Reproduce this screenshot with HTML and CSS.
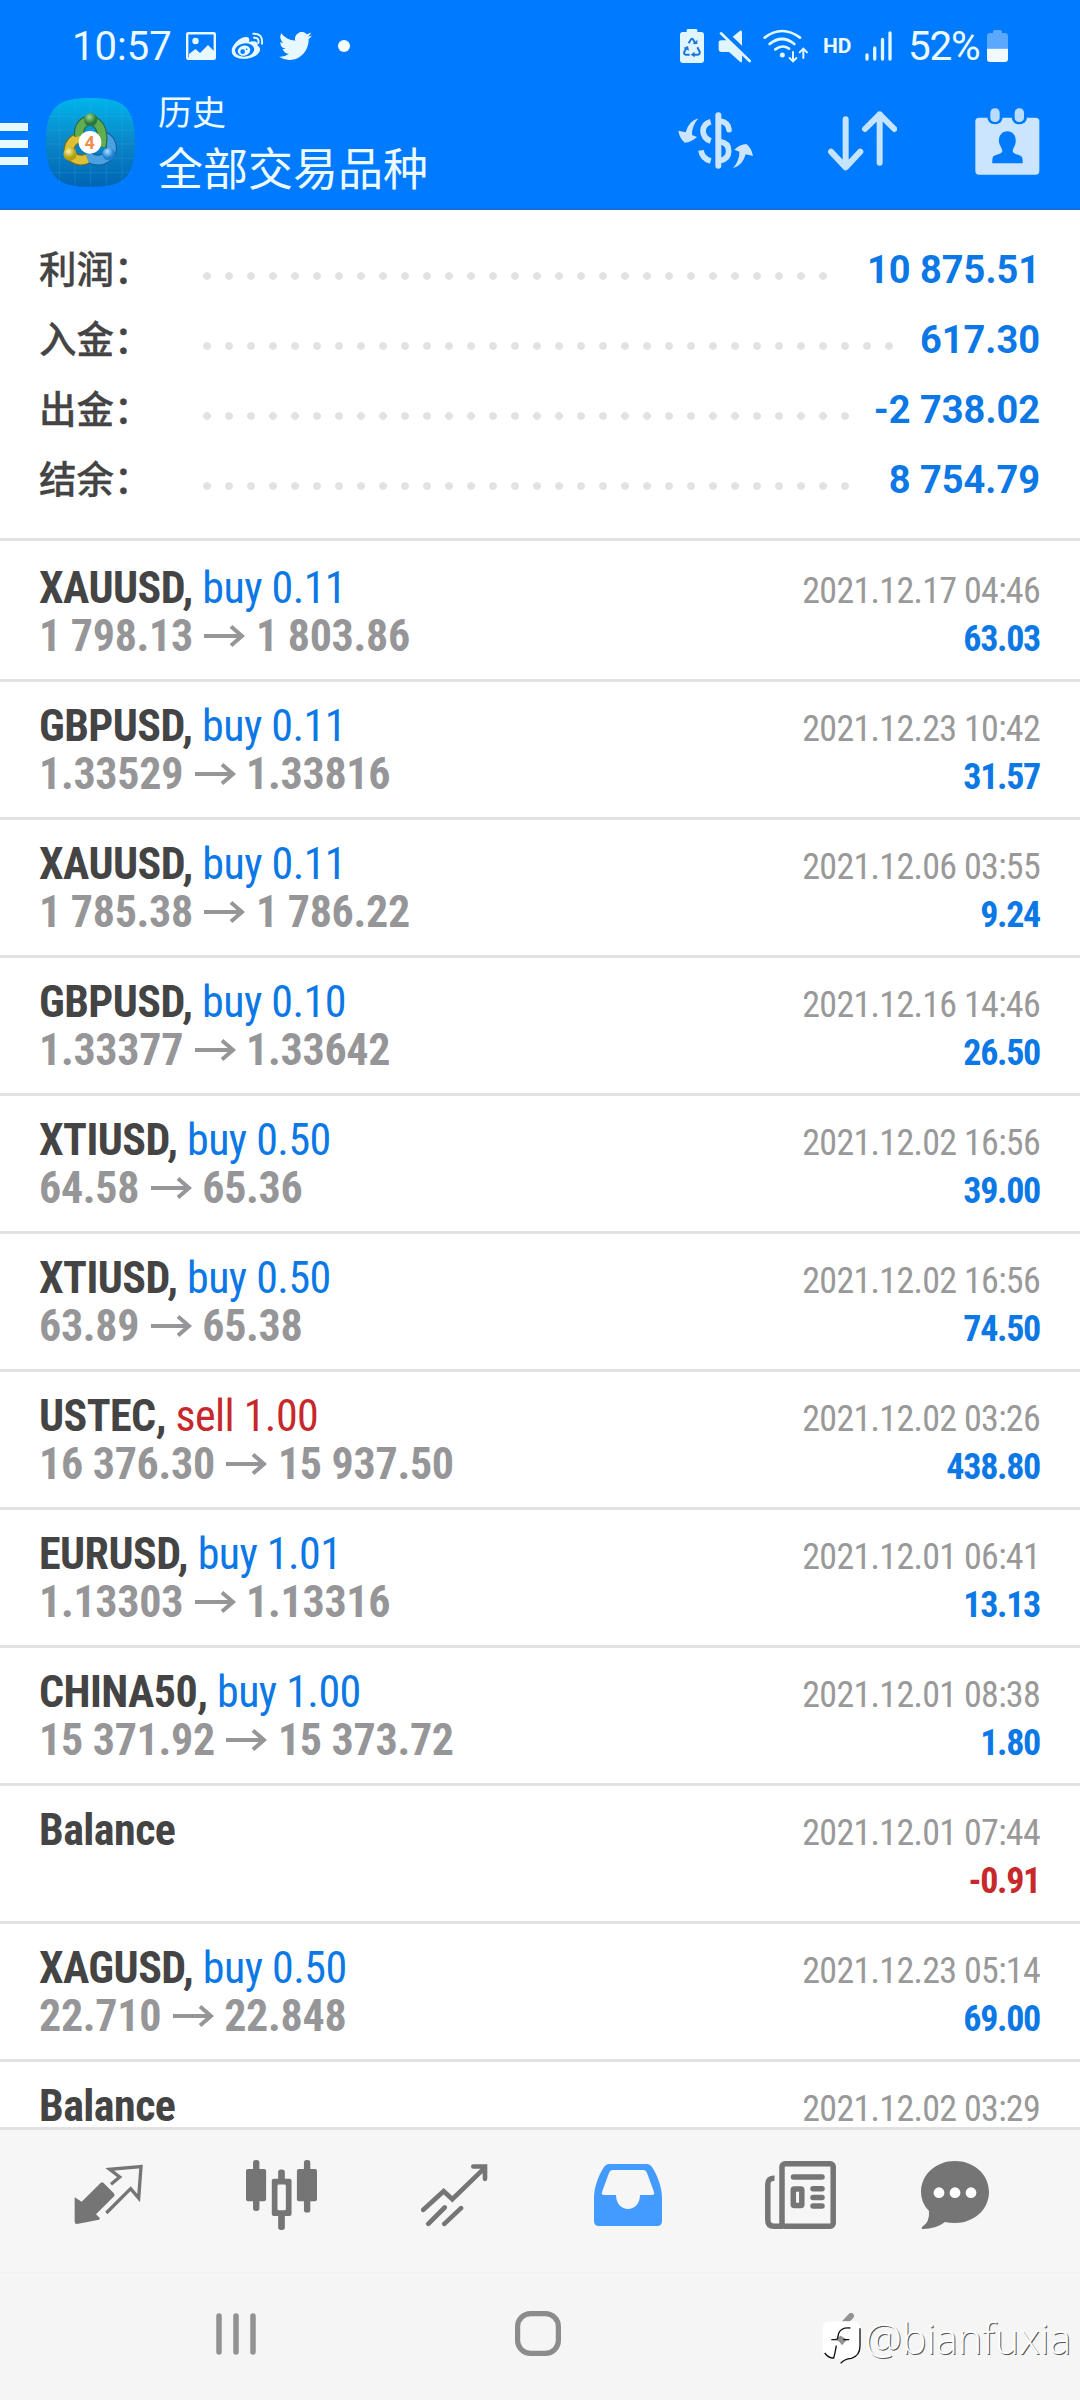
FILE: index.html
```html
<!DOCTYPE html>
<html lang="zh-CN">
<head>
<meta charset="utf-8">
<title>历史</title>
<link rel="stylesheet" href="styles.css">
</head>
<body>
<svg class="defs" width="0" height="0" aria-hidden="true">
  <symbol id="arrow" viewBox="0 0 41 24"><path d="M0 12H38M27 2.500L38 12L27 21.500" fill="none" stroke="currentColor" stroke-width="4"/></symbol>
</svg>
<div class="screen">
  <header class="top">
    <div class="status">
      <span class="clock">10:57</span>
      <svg class="s-pic" width="30" height="28" viewBox="0 0 30 28"><rect x="1.200" y="1.200" width="27.600" height="25.600" rx="1" fill="none" stroke="#e8f8ff" stroke-width="2.400"/><circle cx="9.500" cy="9" r="3.200" fill="#e8f8ff"/><path d="M3 22l6.500-5 4.500 4 8-8 6 6v8H3z" fill="#e8f8ff"/></svg>
      <svg class="s-weibo" width="33" height="28" viewBox="695 37 99 84"><path d="M697 93C697 76 722 51 742 52C751 53 751 61 749 67C761 62 777 64 775 78C786 84 783 95 776 102C764 115 742 118 728 117C710 116 697 107 697 93Z" fill="#e8f8ff"/><ellipse cx="736" cy="91" rx="29" ry="20" fill="#007aff" transform="rotate(-8 736 91)"/><ellipse cx="734" cy="93" rx="19" ry="15" fill="#e8f8ff" transform="rotate(-15 734 93)"/><circle cx="730" cy="96" r="7" fill="#007aff"/><circle cx="742" cy="89" r="2.500" fill="#007aff"/><path d="M764 54Q780 53 777 70M762 42Q791 40 788 72" fill="none" stroke="#e8f8ff" stroke-width="6" stroke-linecap="round"/></svg>
      <svg class="s-bird" width="33" height="28" viewBox="0 2.200 24 19.600" preserveAspectRatio="none"><path fill="#e8f8ff" d="M23.953 4.57a10 10 0 01-2.825.775 4.958 4.958 0 002.163-2.723c-.951.555-2.005.959-3.127 1.184a4.92 4.92 0 00-8.384 4.482C7.69 8.095 4.067 6.13 1.64 3.162a4.822 4.822 0 00-.666 2.475c0 1.71.87 3.213 2.188 4.096a4.904 4.904 0 01-2.228-.616v.06a4.923 4.923 0 003.946 4.827 4.996 4.996 0 01-2.212.085 4.936 4.936 0 004.604 3.417 9.867 9.867 0 01-6.102 2.105c-.39 0-.779-.023-1.17-.067a13.995 13.995 0 007.557 2.209c9.053 0 13.998-7.496 13.998-13.985 0-.21 0-.42-.015-.63A9.935 9.935 0 0024 4.59z"/></svg>
      <span class="s-dot"></span>
      <svg class="s-saver" width="24" height="34" viewBox="60 27 72 102"><path d="M80 36V31Q80 27 84 27H108Q112 27 112 31V36H124Q132 36 132 45V120Q132 129 123 129H69Q60 129 60 120V45Q60 36 68 36Z" fill="#e0f5ff"/><path d="M86 70L93 58Q96 55 99 58L107 72M112 82L119 95Q121 103 113 104H101M89 104H78Q70 103 73 95L81 82" fill="none" stroke="#1b76dd" stroke-width="6"/><path d="M98 72h14v-13zM104 95v17l-12-8zM70 84l14-6 3 14z" fill="#1b76dd"/></svg>
      <svg class="s-mute" width="33" height="33" viewBox="174 28 99 99"><path d="M176 64Q176 59 183 59H206L246 99V121Q246 126 241 124L207 94H185Q176 94 176 86ZM218 48L240 30Q246 28 246 34V75Z" fill="#e0f5ff"/><path d="M183 38L269 121" stroke="#e0f5ff" stroke-width="8" stroke-linecap="round"/></svg>
      <svg class="s-wifi" width="45" height="34" viewBox="310 25 135 102" fill="none" stroke="#e0f8ff" stroke-width="8" stroke-linecap="round"><path d="M315 51Q367 11 421 51M330 70Q367 40 404 70M347 86Q368 70 388 84"/><circle cx="368" cy="103" r="3.500" fill="#e0f8ff"/><path d="M400 94V120M390 112L400 122L410 112M431 112V86M420 95L431 84L442 95" stroke-width="6"/></svg>
      <span class="s-hd">HD</span>
      <svg class="s-signal" width="27" height="30" viewBox="0 0 27 30"><path d="M2 24V28M9.700 17V28M17.500 8.500V28M25 2V28" stroke="#e0f8ff" stroke-width="3.300" stroke-linecap="round"/></svg>
      <span class="s-pct">52%</span>
      <svg class="s-batt" width="21" height="32" viewBox="0 0 21 32"><path d="M6 3V2Q6 0 8 0H13Q15 0 15 2V3H18Q21 3 21 6V18H0V6Q0 3 3 3Z" fill="#5ba8ff"/><path d="M0 18.500H21V29Q21 32 18 32H3Q0 32 0 29Z" fill="#f0faff"/></svg>
    </div>
    <div class="bar">
      <div class="menu"><i></i><i></i><i></i></div>
      <svg class="logo" width="89" height="89" viewBox="138 234 267 267">
        <defs>
          <linearGradient id="bg" x1="0" y1="0" x2="0" y2="1"><stop offset="0" stop-color="#00b4ec"/><stop offset=".5" stop-color="#0b86c8"/><stop offset="1" stop-color="#0064b4"/></linearGradient>
          <radialGradient id="gr" cx=".4" cy=".3"><stop offset="0" stop-color="#9fdc8c"/><stop offset="1" stop-color="#28783c"/></radialGradient>
          <radialGradient id="ye" cx=".4" cy=".3"><stop offset="0" stop-color="#fff0a0"/><stop offset="1" stop-color="#b0a010"/></radialGradient>
          <radialGradient id="bl" cx=".4" cy=".3"><stop offset="0" stop-color="#a8e0ff"/><stop offset="1" stop-color="#1f7fd0"/></radialGradient>
        </defs>
        <path d="M272 234C370 234 405 260 405 367S370 501 272 501 138 474 138 367 173 234 272 234Z" fill="url(#bg)"/>
        <path d="M178 240V494M225 236V500M272 236V500M319 236V500M366 240V494M142 290H402M140 330H404M140 372H404M140 415H404M145 458H398" stroke="#41b9e4" stroke-width="1.500" opacity=".4"/>
        <g fill="none">
          <path d="M258 402C272 422 305 428 324 408C342 390 336 362 312 350" stroke="#185f9a" stroke-width="33"/>
          <path d="M258 402C272 422 305 428 324 408C342 390 336 362 312 350" stroke="#4aa3e0" stroke-width="26"/>
          <path d="M262 416C226 430 198 402 210 376Q220 354 244 354" stroke="#6c7020" stroke-width="33"/>
          <path d="M262 416C226 430 198 402 210 376Q220 354 244 354" stroke="#dcc136" stroke-width="26"/>
          <path d="M238 348C234 320 250 302 270 302S316 325 304 380" stroke="#256b45" stroke-width="31"/>
          <path d="M238 348C234 320 250 302 270 302S316 325 304 380" stroke="#62ad50" stroke-width="24"/>
        </g>
        <circle cx="272" cy="299" r="20" fill="url(#gr)"/><circle cx="210" cy="402" r="20" fill="url(#ye)"/><circle cx="326" cy="402" r="19" fill="url(#bl)"/>
        <circle cx="270" cy="367" r="34" fill="#fff"/>
        <text x="269" y="387" class="logo-num">4</text>
      </svg>
      <div class="titles"><span class="sub">历史</span><span class="title">全部交易品种</span></div>
      <svg class="a-money" width="76" height="59" viewBox="52 272 228 177"><g fill="none" stroke="#cce5ff" stroke-width="17"><path d="M173 285V436" stroke-width="18" stroke-linecap="round"/><path d="M178 302Q203 306 205 328" stroke-linecap="round"/><path d="M178 364Q204 368 204 392T178 421"/><path d="M150 304Q128 310 127 332Q128 354 150 362M121 390Q124 414 150 422"/></g><g fill="#cce5ff"><path id="swoop" d="M113 294Q84 302 75 336L53 331Q57 355 73 367Q92 366 109 350L94 344Q93 318 113 294Z"/><use href="#swoop" transform="rotate(180 165 369)"/></g></svg>
      <svg class="a-sort" width="69" height="60" viewBox="499 275 207 180" fill="none" stroke="#c4e4ff" stroke-width="18" stroke-linecap="round" stroke-linejoin="round"><path d="M552 300V444M508 397L552 444L596 397M654 430V285M610 329L654 285L698 329"/></svg>
      <svg class="a-cal" width="65" height="67" viewBox="944 263 195 201"><rect x="945" y="292" width="192" height="171" rx="11" fill="#cce5ff"/><g fill="#007aff"><rect x="981" y="258" width="46" height="54" rx="22"/><rect x="1054" y="258" width="46" height="54" rx="22"/><path d="M1041 333C1058 333 1068 347 1066 366C1065 377 1058 383 1057 391C1057 400 1074 403 1082 407Q1088 411 1087 429H996Q995 411 1000 407C1008 403 1026 400 1026 391C1025 383 1018 377 1016 366C1014 347 1024 333 1041 333Z"/></g><rect x="990" y="264" width="28" height="41" rx="13" fill="#b8dcff"/><rect x="1063" y="264" width="28" height="41" rx="13" fill="#b8dcff"/></svg>
    </div>
  </header>

  <main class="content">
    <section class="summary">
      <div class="sum"><span class="k">利润：</span><span class="dots n29"></span><b>10 875.51</b></div>
      <div class="sum"><span class="k">入金：</span><span class="dots n32"></span><b>617.30</b></div>
      <div class="sum"><span class="k">出金：</span><span class="dots n30"></span><b>-2 738.02</b></div>
      <div class="sum"><span class="k">结余：</span><span class="dots n30"></span><b>8 754.79</b></div>
    </section>
    <section class="deals">
      <div class="deal"><span class="sym">XAUUSD, <em>buy 0.11</em></span><time>2021.12.17 04:46</time><span class="px">1 798.13<svg><use href="#arrow"/></svg>1 803.86</span><b>63.03</b></div>
      <div class="deal"><span class="sym">GBPUSD, <em>buy 0.11</em></span><time>2021.12.23 10:42</time><span class="px">1.33529<svg><use href="#arrow"/></svg>1.33816</span><b>31.57</b></div>
      <div class="deal"><span class="sym">XAUUSD, <em>buy 0.11</em></span><time>2021.12.06 03:55</time><span class="px">1 785.38<svg><use href="#arrow"/></svg>1 786.22</span><b>9.24</b></div>
      <div class="deal"><span class="sym">GBPUSD, <em>buy 0.10</em></span><time>2021.12.16 14:46</time><span class="px">1.33377<svg><use href="#arrow"/></svg>1.33642</span><b>26.50</b></div>
      <div class="deal"><span class="sym">XTIUSD, <em>buy 0.50</em></span><time>2021.12.02 16:56</time><span class="px">64.58<svg><use href="#arrow"/></svg>65.36</span><b>39.00</b></div>
      <div class="deal"><span class="sym">XTIUSD, <em>buy 0.50</em></span><time>2021.12.02 16:56</time><span class="px">63.89<svg><use href="#arrow"/></svg>65.38</span><b>74.50</b></div>
      <div class="deal"><span class="sym">USTEC, <em class="neg">sell 1.00</em></span><time>2021.12.02 03:26</time><span class="px">16 376.30<svg><use href="#arrow"/></svg>15 937.50</span><b>438.80</b></div>
      <div class="deal"><span class="sym">EURUSD, <em>buy 1.01</em></span><time>2021.12.01 06:41</time><span class="px">1.13303<svg><use href="#arrow"/></svg>1.13316</span><b>13.13</b></div>
      <div class="deal"><span class="sym">CHINA50, <em>buy 1.00</em></span><time>2021.12.01 08:38</time><span class="px">15 371.92<svg><use href="#arrow"/></svg>15 373.72</span><b>1.80</b></div>
      <div class="deal"><span class="sym">Balance</span><time>2021.12.01 07:44</time><span class="px"></span><b class="neg">-0.91</b></div>
      <div class="deal"><span class="sym">XAGUSD, <em>buy 0.50</em></span><time>2021.12.23 05:14</time><span class="px">22.710<svg><use href="#arrow"/></svg>22.848</span><b>69.00</b></div>
      <div class="deal"><span class="sym">Balance</span><time>2021.12.02 03:29</time></div>
    </section>
  </main>

  <nav class="tabs">
    <svg width="69" height="62" viewBox="43 78 207 186"><path d="M45 178L66 191L125 133L131 134L164 167V174L109 229L121 241L118 245L52 258Q45 258 45 251Z" fill="#757575"/><path d="M154 139L180 117L150 94L244 86L237 180L213 152L140 225" fill="none" stroke="#757575" stroke-width="10"/></svg>
    <svg width="71" height="70" viewBox="557 63 212 209"><g fill="#757575"><rect x="557" y="90" width="60" height="96" rx="6"/><rect x="709" y="90" width="60" height="96" rx="6"/><rect x="578" y="63" width="19" height="152" rx="8"/><rect x="730" y="63" width="19" height="157" rx="8"/><rect x="653" y="91" width="20" height="181" rx="8"/><rect x="634" y="119" width="59" height="111" rx="6"/></g><rect x="651" y="136" width="25" height="77" rx="4" fill="#f6f6f6"/></svg>
    <svg width="67" height="63" viewBox="1083 72 201 188" fill="none" stroke="#757575" stroke-width="14" stroke-linecap="round"><path d="M1090 209L1151 153L1177 177L1271 86M1240 79H1275V116M1105 251L1154 202M1153 251L1203 204"/></svg>
    <svg width="68" height="62" viewBox="0 0 68 62"><path fill="#439bff" fill-rule="evenodd" d="M15 0H53Q56 0 58 3C64 12 68 24 68 34V57Q68 62 63 62H5Q0 62 0 57V34C0 24 4 12 10 3Q12 0 15 0ZM19 6Q16 6 15 9L8 28Q7 31 10 31H22C22 40 28 45 34 45S46 40 46 31H58Q61 31 60 28L53 9Q52 6 49 6Z"/></svg>
    <svg width="71" height="68" viewBox="0 0 71 68" fill="none" stroke="#757575" stroke-width="5.500" stroke-linecap="round"><rect x="17" y="2.750" width="51.200" height="62.500" rx="3"/><path d="M9.500 17.200Q2.800 17 2.800 23V59Q2.800 65.200 9 65.200H18" stroke-linecap="butt"/><path d="M28.500 16H57M48 27.800H57M48 36.400H57M48 45H57"/><rect x="28.300" y="28" width="8.500" height="16.500" rx="1"/></svg>
    <svg width="68" height="68" viewBox="0 0 68 68"><path d="M34 0C53 0 68 13.500 68 31S53 62 34 62Q28 62 24 61Q15 68 2 68Q0 68 1 66Q9 61 8 50Q0 42 0 31C0 13.500 15 0 34 0Z" fill="#757575"/><g fill="#fff"><circle cx="18" cy="31.700" r="5.400"/><circle cx="34" cy="31.700" r="5.400"/><circle cx="50" cy="31.700" r="5.400"/></g></svg>
  </nav>
  <footer class="sysnav">
    <svg class="recents" width="40" height="42" viewBox="0 0 40 42"><path d="M3 3V39M20 3V39M37 3V39" stroke="#929292" stroke-width="5.500" stroke-linecap="round"/></svg>
    <svg class="home" width="46" height="45" viewBox="0 0 46 45"><rect x="2.600" y="2.600" width="40.800" height="39.800" rx="13" fill="none" stroke="#8c8c8c" stroke-width="5.200"/></svg>
    <svg class="back" width="24" height="42" viewBox="0 0 24 42"><path d="M21 3L4 21" fill="none" stroke="#929292" stroke-width="6" stroke-linecap="round"/></svg>
    <div class="mark">
      <svg width="40" height="46" viewBox="66 60 120 138"><path d="M88 67H162Q180 68 181 92V140Q180 172 150 180Q132 182 124 194L126 180H92Q68 176 68 150V90Q68 68 88 67Z" fill="#fff"/><path d="M122 110L142 122L135 128L126 139L118 128L104 121Z" fill="#929292"/><path d="M180 88V140Q180 170 154 178Q132 180 122 193M151 87Q124 84 116 103L112 121M94 122H110M130 122H148M109 140Q104 168 101 177Q86 178 74 162" fill="none" stroke="#111" stroke-width="4"/></svg>
      <span>@bianfuxia</span>
    </div>
  </footer>
</div>
</body>
</html>
```
FILE: styles.css
```css
* { box-sizing: border-box; }
body { margin: 0; background: #fff; font-family: Roboto, "Noto Sans CJK SC", sans-serif; }
svg { display: block; flex: none; }
.defs { position: absolute; }
.screen { width: 1080px; height: 2400px; display: flex; flex-direction: column; overflow: hidden; }

.top { flex: none; height: 210px; background: #007aff; border-bottom: 2px solid #126ed8; color: #ecfaff; }
.status { height: 92px; display: flex; align-items: center; padding-left: 72px; }
.clock { font-size: 40px; width: 99px; white-space: nowrap; }
.s-pic { margin-left: 15px; }
.s-weibo { margin-left: 15px; }
.s-bird { margin-left: 15px; }
.s-dot { width: 12px; height: 12px; border-radius: 50%; background: #f4fdff; margin-left: 26px; }
.s-saver { margin-left: auto; }
.s-mute { margin-left: 14px; }
.s-wifi { margin-left: 12px; }
.s-hd { margin-left: 15px; width: 30px; font-size: 21px; font-weight: 700; }
.s-signal { margin-left: 12px; }
.s-pct { margin-left: 16px; width: 72px; font-size: 40.500px; letter-spacing: -1.300px; white-space: nowrap; }
.s-batt { margin-left: 7px; margin-right: 72px; }

.bar { height: 104px; display: flex; align-items: center; }
.menu { width: 28px; display: flex; flex-direction: column; gap: 9.300px; }
.menu i { height: 7.500px; background: #e8f8ff; }
.logo { margin: -4px 0 0 18px; }
.logo-num { font: 700 54px Roboto, sans-serif; fill: #f08c4a; text-anchor: middle; }
.titles { margin-left: 23px; display: flex; flex-direction: column; font-family: "Noto Sans CJK SC", sans-serif; font-weight: 400; }
.sub { font-size: 34px; line-height: 46px; }
.title { font-size: 45px; line-height: 66px; }
.a-money { margin-left: auto; margin-top: -8px; }
.a-sort { margin-left: 74px; margin-top: -6px; }
.a-cal { margin-left: 78px; margin-right: 40px; margin-top: -6px; }

.content { flex: 1; min-height: 0; overflow: hidden; }
.summary { height: 331px; padding: 22px 40px 0 39px; border-bottom: 3px solid #e2e2e2; }
.sum { height: 70px; display: flex; align-items: center; }
.k { width: 157px; font: 500 37.500px/70px "Noto Sans CJK SC", sans-serif; color: #444; -webkit-text-stroke: .3px #444; }
.dots { height: 22px; margin-top: 18px; background: radial-gradient(circle at 11px 11px, #e2e2e2 3.500px, transparent 4.200px) 0 0 / 22px 22px; }
.n29 { width: calc(29 * 22px); }
.n30 { width: calc(30 * 22px); }
.n32 { width: calc(32 * 22px); }
.sum b { margin-left: auto; padding-top: 5px; font-size: 38px; color: #0c78e6; white-space: nowrap; }

.deal { height: 138px; padding: 20px 40px 0 39px; display: grid; grid-template-columns: 1fr auto; grid-auto-rows: 48px; align-items: baseline; border-bottom: 3px solid #e2e2e2; font-family: "Roboto Condensed", Roboto, sans-serif; line-height: 48px; }
.deal:first-child { height: 141px; padding-top: 23px; }
.deal:last-child { height: auto; border-bottom: 0; padding-top: 24px; grid-auto-rows: 40px; line-height: 40px; }
.sym { font-size: 44px; font-weight: 700; color: #444; letter-spacing: -.550px; }
.sym em { font-style: normal; font-weight: 400; color: #0c78e6; }
.deal time { font-size: 36px; color: #999; letter-spacing: -.700px; }
.px { display: flex; align-items: center; font-size: 44px; font-weight: 700; color: #969698; letter-spacing: -.300px; }
.px svg { width: 41px; height: 24px; margin: 0 10.500px 0 11.500px; }
.px:empty + b { padding-top: 3px; }
.deal b { font-size: 36px; color: #0c78e6; text-align: right; letter-spacing: -1.300px; }
.sym em.neg, .deal b.neg { color: #c6282b; }

.tabs { flex: none; height: 145px; border-top: 3px solid #e2e2e2; background: #f6f6f6; display: grid; grid-template-columns: repeat(5, 173px) 135px; padding: 0 0 12px 22px; align-items: center; justify-items: center; }
.sysnav { flex: none; position: relative; height: 128px; background: #f5f5f5; border-top: 1px solid #f2f2f2; display: flex; align-items: center; padding: 0 0 6px 216px; }
.home { margin-left: 259px; }
.back { margin-left: 269px; }
.mark { position: absolute; left: 822px; top: 46px; display: flex; align-items: center; }
.mark span { margin: -8px 0 0 3px; font: 300 41.500px/46px "Open Sans", "Noto Sans", sans-serif; color: #fff; text-shadow: 1px 1px 0 #555; }
```
